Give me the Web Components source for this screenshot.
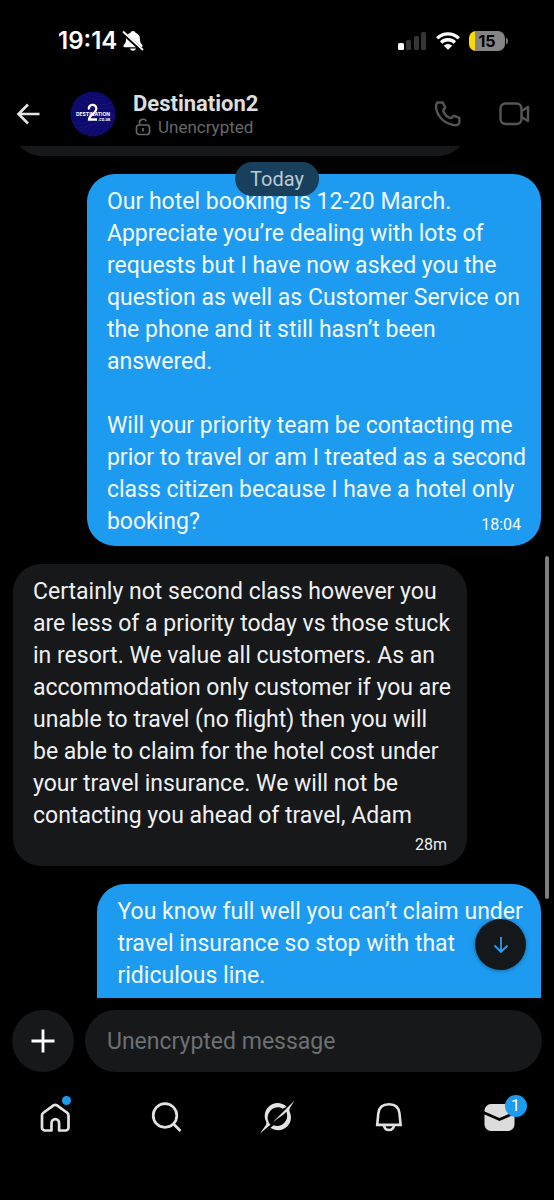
<!DOCTYPE html>
<html lang="en">
<head>
<meta charset="utf-8">
<meta name="viewport" content="width=device-width, initial-scale=1">
<title>Destination2</title>
<style>
  html, body { margin: 0; background: #000; }
  body { font-family: Roboto, "Liberation Sans", sans-serif; color: #e7e9ea; }
</style>
</head>
<body>
<dm-screen>
  <status-bar slot="status" time="19:14" battery="15"></status-bar>
  <chat-header slot="header" name="Destination2" state="Unencrypted"></chat-header>
  <chat-thread day="Today">
    <chat-bubble kind="in" class="earlier"></chat-bubble>
    <chat-bubble kind="out" time="18:04" inline-time>Our hotel booking is 12-20 March.
Appreciate you’re dealing with lots of
requests but I have now asked you the
question as well as Customer Service on
the phone and it still hasn’t been
answered.

Will your priority team be contacting me
prior to travel or am I treated as a second
class citizen because I have a hotel only
booking?</chat-bubble>
    <chat-bubble kind="in" time="28m">Certainly not second class however you
are less of a priority today vs those stuck
in resort. We value all customers. As an
accommodation only customer if you are
unable to travel (no flight) then you will
be able to claim for the hotel cost under
your travel insurance. We will not be
contacting you ahead of travel, Adam</chat-bubble>
    <chat-bubble kind="out" class="latest" narrow>You know full well you can’t claim under
travel insurance so stop with that
ridiculous line.</chat-bubble>
  </chat-thread>
  <message-composer slot="composer"></message-composer>
  <tab-bar slot="tabs"></tab-bar>
</dm-screen>

<script>
const define = (name, render) => customElements.define(name, class extends HTMLElement {
  connectedCallback() {
    if (this.shadowRoot) return;
    this.attachShadow({ mode: "open" }).innerHTML = render(this);
  }
});

define("dm-screen", () => `
  <style>
    :host { display: flex; flex-direction: column; height: 100vh; background: #000; overflow: hidden; }
    main { flex: 1; min-height: 0; display: flex; }
  </style>
  <slot name="status"></slot>
  <slot name="header"></slot>
  <main><slot></slot></main>
  <slot name="composer"></slot>
  <slot name="tabs"></slot>`);

define("status-bar", el => `
  <style>
    :host { display: flex; align-items: center; height: 82px; padding: 0 46px 0 58px; flex: none; box-sizing: border-box; color: #fff; }
    .time { font: 600 24px/28px Inter, sans-serif; }
    .bell { margin-left: 5px; }
    .right { margin-left: auto; display: flex; align-items: center; gap: 9px; }
    .battery { display: flex; align-items: center; gap: 1px; }
    .cell { width: 36px; height: 20px; border-radius: 7px; background: linear-gradient(90deg, #fcd90b 6px, #858585 6px);
      color: #000; font: 700 16px/20px Inter, sans-serif; text-align: center; box-sizing: border-box; }
    .cap { width: 2px; height: 6px; border-radius: 0 2px 2px 0; background: #777; }
    svg { display: block; }
  </style>
  <span class="time">${el.getAttribute("time")}</span>
  <svg class="bell" width="22" height="22" viewBox="0 0 22 22" aria-hidden="true">
    <path fill="#fff" d="M11 1c-1.300 0-2.200.8-2.500 1.800C5.600 3.600 4.200 6 4.100 8.500c-.1 3.300-.6 4.500-2 6-1 1-.8 2.700.7 2.700h16.400c1.500 0 1.700-1.700.7-2.700-1.400-1.500-1.900-2.700-2-6-.1-2.500-1.500-4.900-4.400-5.700C13.200 1.800 12.300 1 11 1zM8 18.400a3.100 3.100 0 0 0 6 0z"/>
    <path d="M1.500 3.300 19.800 20.200" stroke="#000" stroke-width="3.800"/>
    <path d="M1.500 2 20.500 19.500" stroke="#fff" stroke-width="1.800" stroke-linecap="round"/>
  </svg>
  <div class="right">
    <svg width="29" height="20" viewBox="0 0 29 20" role="img" aria-label="Signal">
      <rect x="0" y="12" width="6" height="7" rx="1.500" fill="#fff"/>
      <g fill="#353535"><rect x="8" y="9" width="5" height="10" rx="1.500"/><rect x="16" y="5" width="5" height="14" rx="1.500"/><rect x="23" y="1" width="5" height="18" rx="1.500"/></g>
    </svg>
    <svg width="24" height="18" viewBox="0 0 24 18" role="img" aria-label="Wi-Fi">
      <g fill="none" stroke="#fff" stroke-width="3.300"><path d="M1.200 6.200a15.500 15.500 0 0 1 21.600 0"/><path d="M5.100 10.500a10 10 0 0 1 13.800 0"/></g>
      <path fill="#fff" d="M12 17.800 7.800 13.700a6 6 0 0 1 8.400 0z"/>
    </svg>
    <div class="battery"><div class="cell">${el.getAttribute("battery")}</div><div class="cap"></div></div>
  </div>`);

define("chat-header", el => `
  <style>
    :host { display: flex; align-items: center; height: 64px; flex: none; padding: 0 24px 0 16px; box-sizing: border-box; }
    button { all: unset; display: block; }
    svg { display: block; }
    .avatar { margin: 0 17px 0 30px; }
    .who { display: grid; }
    h1 { margin: 0; font-size: 22px; line-height: 26px; font-weight: 700; color: #dcdddd; }
    .state { display: flex; align-items: center; gap: 7px; font-size: 17px; line-height: 20px; color: #65686b; padding-left: 2px; }
    .actions { margin-left: auto; display: flex; gap: 37px; align-items: center; }
  </style>
  <button aria-label="Back"><svg width="24" height="24" viewBox="0 0 24 24" fill="none" stroke="#e4e4e4" stroke-width="2.600"><path d="M23.500 12H2.500M12 2.500 2.500 12l9.500 9.500"/></svg></button>
  <svg class="avatar" width="46" height="46" viewBox="0 0 46 46" role="img" aria-label="Destination2 logo">
    <defs><clipPath id="c"><circle cx="23" cy="23" r="22.500"/></clipPath></defs>
    <g clip-path="url(#c)">
      <rect width="46" height="46" fill="#0e0a6b"/>
      <g fill="none" stroke="#262398" stroke-width=".7" opacity=".5">
        <path d="M10 0c6 10 24 10 36 6M15-1c6 8 20 8 31 3M6 2c8 12 26 14 40 9M2 6c10 12 28 14 44 9M24 46c4-8 12-14 22-18M18 46c6-10 16-17 28-21M12 46c8-12 18-18 34-24M30 46c2-6 8-10 16-14M6 44c8-8 14-10 20-12M0 30c8 4 14 2 22 0M0 35c8 4 14 1 22-2"/>
      </g>
      <path d="M19 18.500c-1.500-6 8-6 7.300-.5-.4 4-7.500 7-7.300 10.500h8" fill="none" stroke="#fff" stroke-width="2.300"/>
      <text x="23" y="25" text-anchor="middle" font-family="Inter, sans-serif" font-weight="700" font-size="5" fill="#fff">DESTINATION</text>
      <text x="28" y="30" font-family="Inter, sans-serif" font-weight="700" font-size="4" fill="#fff">.co.uk</text>
    </g>
  </svg>
  <div class="who">
    <h1>${el.getAttribute("name")}</h1>
    <div class="state">
      <svg width="16" height="18" viewBox="0 0 16 18" fill="none" stroke="#65686b" stroke-width="1.700"><rect x="1.500" y="7" width="13" height="9.500" rx="2.500"/><path d="M4.500 7V4.500C4.500.8 10 .2 11.200 3.200M8 10v3.500"/></svg>
      <span>${el.getAttribute("state")}</span>
    </div>
  </div>
  <div class="actions">
    <button aria-label="Voice call"><svg width="28" height="28" viewBox="0 0 28 28" fill="none" stroke="#555" stroke-width="2.400" stroke-linejoin="round"><path d="M3.300 2.500h5.500l2.500 5.300c-2.500 1.600-2.500 2.800-1.500 4.600 1.300 2.500 3.300 4.400 5.900 5.500 1.800.8 2.600-.2 4-2.300l5.600 2.200v5.400c-1 1.900-4 2.300-6.500 1.700C10 23 3.600 16.500 2.200 8.500c-.4-2.500 0-4.800 1.100-6z"/></svg></button>
    <button aria-label="Video call"><svg width="31" height="24" viewBox="0 0 31 24" fill="none" stroke="#555" stroke-width="2.400" stroke-linejoin="round"><rect x="1.500" y="1.500" width="21" height="20.500" rx="5"/><path d="M22.500 9 29 5v14l-6.500-4"/></svg></button>
  </div>`);

define("chat-thread", el => `
  <style>
    :host { display: block; position: relative; flex: 1; overflow: hidden; }
    .list { display: flex; flex-direction: column; gap: 18px; padding: 0 13px; margin-top: -54px; }
    ::slotted(*) { flex: none; }
    ::slotted(.earlier) { height: 64px; }
    ::slotted(.latest) { min-height: 180px; }
    .day { position: absolute; top: 16px; left: 50%; transform: translateX(-50%); padding: 0 15px; border-radius: 17px;
      background: #183f5b; color: #b9cad6; font-size: 20px; line-height: 34px; }
    .thumb { position: absolute; right: 5px; top: 410px; width: 4px; height: 343px; border-radius: 2px; background: #7d7d7d; }
    .down { position: absolute; right: 28px; bottom: 28px; width: 51px; height: 51px; border: 0; padding: 0; border-radius: 50%;
      background: #15181b; display: grid; place-items: center; box-shadow: 0 1px 4px #0005; }
  </style>
  <div class="list"><slot></slot></div>
  <div class="day">${el.getAttribute("day")}</div>
  <div class="thumb"></div>
  <button class="down" aria-label="Jump to latest"><svg width="16" height="18" viewBox="0 0 16 18" fill="none" stroke="#2a9df0" stroke-width="1.800"><path d="M8 1v15M1.500 9.500 8 16l6.500-6.500"/></svg></button>`);

define("chat-bubble", el => `
  <style>
    :host { display: grid; align-content: start; box-sizing: border-box; width: 86%; border-radius: 28px; padding: 12px 8px 8px 20px;
      font-size: 23px; line-height: 32px; }
    :host([kind="in"]) { align-self: flex-start; background: #16181a; color: #eff0f1; }
    :host([kind="out"]) { align-self: flex-end; background: #1d9bf0; color: #f3faff; }
    :host([narrow]) { width: 84%; }
    .text { white-space: pre-line; }
    time { justify-self: end; font-size: 16px; line-height: 18px; margin: 4px 12px 4px 0; }
    :host([inline-time]) .text, :host([inline-time]) time { grid-area: 1 / 1; }
    :host([inline-time]) time { align-self: end; }
  </style>
  <div class="text"><slot></slot></div>
  ${el.hasAttribute("time") ? `<time>${el.getAttribute("time")}</time>` : ""}`);

define("message-composer", () => `
  <style>
    :host { display: flex; gap: 11px; padding: 12px 12px 0; flex: none; }
    button, input { border: 0; padding: 0; margin: 0; height: 62px; background: #16181a; border-radius: 31px; box-sizing: border-box; }
    button { width: 62px; flex: none; display: grid; place-items: center; }
    input { flex: 1; min-width: 0; padding: 0 22px; font: 23px/32px Roboto, sans-serif; color: #e7e9ea; outline: 0; }
    input::placeholder { color: #6c7074; opacity: 1; }
  </style>
  <button aria-label="Add attachment"><svg width="24" height="24" viewBox="0 0 24 24" stroke="#fff" stroke-width="2.800"><path d="M12 .5v23M.5 12h23"/></svg></button>
  <input type="text" aria-label="Message" placeholder="Unencrypted message">`);

define("tab-bar", () => `
  <style>
    :host { display: block; flex: none; height: 128px; }
    nav { display: grid; grid-template-columns: repeat(5, 1fr); padding-top: 23px; }
    a { display: grid; place-items: center; height: 44px; color: #e2e2e2; text-decoration: none; }
    .icon { position: relative; display: block; width: 32px; height: 32px; }
    svg { display: block; overflow: visible; }
    .dot { position: absolute; left: 23px; top: -5px; width: 9px; height: 9px; border-radius: 50%; background: #1d9bf0; }
    .count { position: absolute; left: 22px; top: -6px; width: 22px; height: 22px; border-radius: 50%; background: #1d9bf0;
      color: #fff; font: 16px/22px Roboto, sans-serif; text-align: center; }
  </style>
  <nav>
    <a href="#home" aria-label="Home"><span class="icon">
      <svg width="32" height="32" viewBox="0 0 32 32" fill="none" stroke="currentColor" stroke-width="2.700" stroke-linejoin="round"><path d="M4.700 11.500c-1 .7-1.700 1.700-1.700 3V26.500a3 3 0 0 0 3 3h6.500V22a3.800 3.800 0 0 1 7.600 0v7.500h6.400a3 3 0 0 0 3-3v-12c0-1.300-.6-2.300-1.700-3L18 4.300c-1.200-.7-2.300-.7-3.500 0z"/></svg>
      <span class="dot"></span></span></a>
    <a href="#explore" aria-label="Search"><span class="icon">
      <svg width="32" height="32" viewBox="0 0 32 32" fill="none" stroke="currentColor" stroke-width="2.700"><circle cx="15" cy="14.500" r="11.800"/><path d="m23.300 22.800 7.200 7.200"/></svg></span></a>
    <a href="#grok" aria-label="Grok"><span class="icon">
      <svg width="32" height="32" viewBox="0 0 32 32">
        <path fill="currentColor" d="M25.500 5.700C20.500.8 12.300 1 7.400 5.900c-4 4-4.600 9.600-2.500 14.200 1.100 2.300.3 4-1.400 6L-1 32.500l10.500-8.800C5.700 19.700 5.700 13.300 9.800 9.200c3.300-3.300 8.200-3.800 11.900-1.400zM9.500 26.700c5 3.700 12.200 3.300 16.900-1.400 3.700-3.700 4.500-9.300 2.500-14-1.100-2.400-.4-4.300 1.400-6.600L33.500-.5 11.800 21.300l11-8 2.500-2.500c1.700 3.900.9 8.200-2.200 11.300-3 3-7 3.600-10.400 2.100z"/>
      </svg></span></a>
    <a href="#notifications" aria-label="Notifications"><span class="icon">
      <svg width="32" height="32" viewBox="0 0 32 32" fill="none" stroke="currentColor" stroke-width="2.600"><path d="M5.200 23.900h23.400L27.500 12.500C26.900 6.500 23 3.200 17 3.200S6.900 6.500 6.300 12.500z"/><path d="M11.800 24c.6 3.300 2.600 5 5.200 5s4.600-1.700 5.200-5"/></svg></span></a>
    <a href="#messages" aria-label="Messages, 1 unread"><span class="icon">
      <svg width="32" height="32" viewBox="0 0 32 32"><rect x="1.500" y="3" width="30" height="27" rx="6.500" fill="#dcdcdc"/><path d="m.5 11.500 16 7 16-7" fill="none" stroke="#000" stroke-width="2.800"/></svg>
      <span class="count">1</span></span></a>
  </nav>`);
</script>
</body>
</html>
